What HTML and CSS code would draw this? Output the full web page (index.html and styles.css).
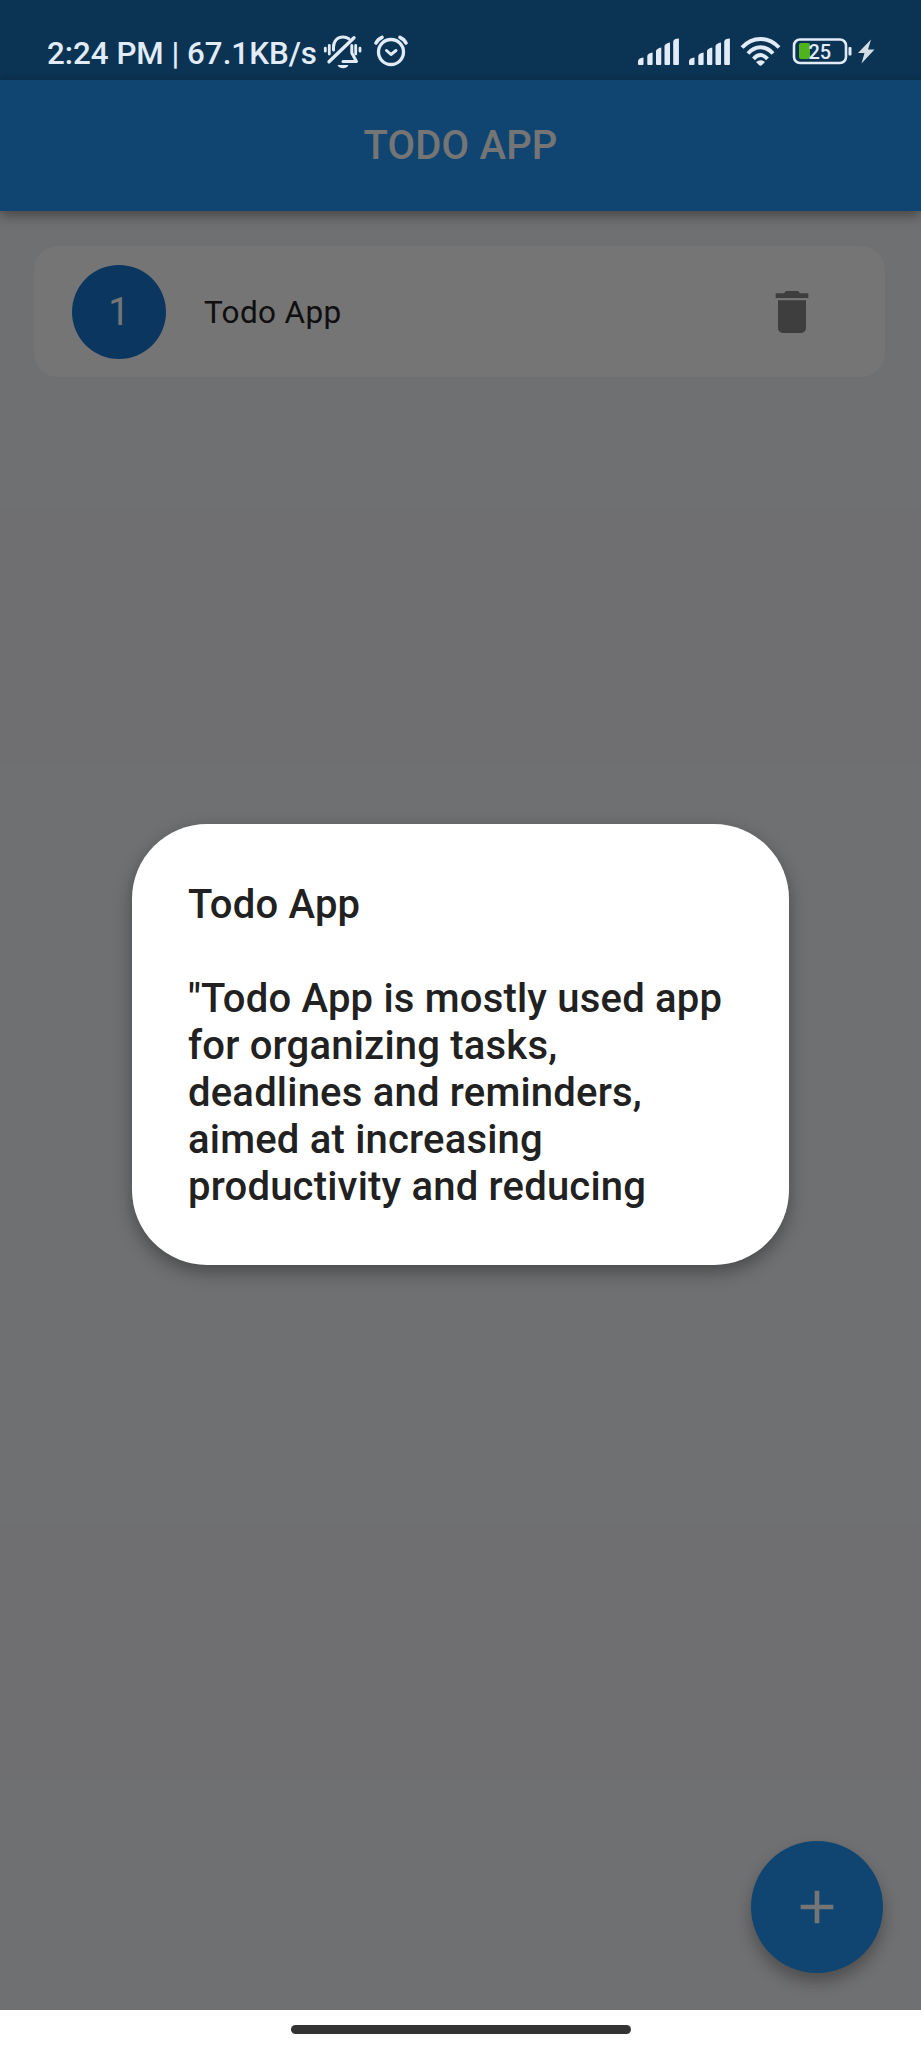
FILE: index.html
```html
<!DOCTYPE html>
<html lang="en">
<head>
<meta charset="utf-8">
<title>Todo App</title>
<link rel="stylesheet" href="styles.css">
</head>
<body>
<div class="screen">
  <div class="status-space"></div>
  <header class="app-bar"><h1 class="app-title">TODO APP</h1></header>
  <main class="content">
    <article class="todo">
      <span class="todo-number">1</span>
      <span class="todo-name">Todo App</span>
      <svg class="todo-delete" viewBox="0 0 24 24"><path d="M6 19c0 1.100.9 2 2 2h8c1.100 0 2-.9 2-2V7H6v12zM19 4h-3.500l-1-1h-5l-1 1H5v2h14V4z"/></svg>
    </article>
    <button class="fab"><svg viewBox="0 0 24 24"><path d="M19 13h-6v6h-2v-6H5v-2h6V5h2v6h6v2z"/></svg></button>
  </main>
  <footer class="nav"><div class="nav-handle"></div></footer>

  <div class="overlay">
    <section class="dialog">
      <p>Todo App</p>
      <p class="dialog-text">"Todo App is mostly used app<br>for organizing tasks,<br>deadlines and reminders,<br>aimed at increasing<br>productivity and reducing</p>
    </section>
  </div>

  <div class="status">
    <span class="status-text">2:24 PM | 67.1KB/s</span>
    <svg class="status-left" width="86" height="36" viewBox="323 33 86 36" fill="none" stroke="#e2ecf8" stroke-width="3" stroke-linecap="round" stroke-linejoin="round">
      <path d="M325.300 48.200v3M329.300 45.500v8.500M355.700 45.500v8.500M360 48.200v3" stroke-width="2.800"/>
      <path d="M333.500 50V47c0-6 4-10 9.500-10c2.400 0 4.300.7 5.900 1.800M351.800 45.500v7.500l4.700 8.500H343"/>
      <path d="M354 37.800L329 61.800" stroke-width="3.400"/>
      <path d="M337.500 65h11c-1 2.300-3 3.200-5.400 3.200s-4.600-.9-5.600-3.200z" fill="#e2ecf8" stroke="none"/>
      <circle cx="391" cy="52" r="12.500" stroke-width="3.300"/>
      <path d="M386.500 50.500l4.500 4 5-4" stroke-width="3"/>
      <path d="M376 43q2-4 6-5.700M400 37.300q4 1.700 6 5.700" stroke-width="3.600"/>
    </svg>
    <svg class="status-right" width="240" height="36" viewBox="636 33 240 36" fill="#e2ecf8">
      <g id="signal">
        <path d="M638 64v-2.500q0-3.500 5.500-4v6.500q0 1-1 1h-3.500q-1 0-1-1zM647.300 64V56q.5-3 5.300-3.500V64q0 1-1 1h-3.300q-1 0-1-1zM656 64V51q.5-2.500 5.300-3.500V64q0 1-1 1h-3.300q-1 0-1-1zM664.500 64V46q.5-2.500 5.500-3.500V64q0 1-1 1h-3.500q-1 0-1-1zM673.200 64V41.500q.5-2.800 5.700-3V64q0 1-1 1h-3.700q-1 0-1-1z"/>
      </g>
      <use href="#signal" x="51"/>
      <g fill="none" stroke="#e2ecf8" stroke-width="4">
        <path d="M742 47.500Q750 39 760.500 39T779 47.500"/>
        <path d="M748 53.500Q753.500 47.300 760.500 47.300T773 53.500"/>
        <path d="M753.500 58.800Q757 55 760.500 55T767.500 58.800"/>
      </g>
      <path d="M756 62q4.500-3.500 9 0l-3 3q-1.500 1.500-3 0z"/>
      <rect x="794" y="39.500" width="52" height="23.500" rx="6" fill="none" stroke="#e2ecf8" stroke-width="2.600"/>
      <rect x="799" y="43" width="11" height="16" rx="2" fill="#4fb41b"/>
      <rect x="848.500" y="47" width="3" height="8.500" rx="1"/>
      <text class="battery-text" x="808.500" y="59">25</text>
      <path d="M871 39.500L858 53h6.500L861.500 63.500 874.500 49.500H868z" fill="#d5dde4"/>
    </svg>
  </div>
</div>
</body>
</html>
```

FILE: styles.css
```css
* { box-sizing: border-box; }
body { margin: 0; font-family: Roboto, sans-serif; }
p, h1 { margin: 0; font: inherit; }
.screen { position: relative; display: flex; flex-direction: column; width: 921px; height: 2048px; background: #f2f3f6; overflow: hidden; }
.status-space { height: 80px; background: #1970b6; }
.app-bar { height: 131px; display: flex; align-items: center; justify-content: center; background: #2196f3; color: #fff; box-shadow: 0 4px 12px rgba(0,0,0,.4); }
.app-title { font-size: 40px; font-weight: 500; letter-spacing: .2px; }
.content { flex: 1; display: flex; flex-direction: column; justify-content: space-between; padding: 35px 38px 37px 34px; }
.todo { width: 851px; height: 131px; display: flex; align-items: center; padding: 0 65px 0 38px; border-radius: 24px; background: #fefefe; }
.todo-number { width: 94px; height: 94px; display: flex; align-items: center; justify-content: center; border-radius: 50%; background: #1976d2; color: #fff; font-size: 38px; }
.todo-name { flex: 1; margin-left: 38px; padding-top: 2px; font-size: 31.500px; letter-spacing: .35px; color: #222; }
.todo-delete { width: 56px; height: 56px; fill: #888; }
.fab { align-self: flex-end; width: 132px; height: 132px; padding: 0; display: flex; align-items: center; justify-content: center; border: 0; border-radius: 50%; background: #2196f3; box-shadow: 0 9px 16px rgba(0,0,0,.3); }
.fab svg { width: 56px; height: 56px; fill: #fff; }
.nav { height: 38px; display: flex; justify-content: center; padding-top: 15px; background: #fff; }
.nav-handle { width: 340px; height: 9px; border-radius: 5px; background: #333; }
.overlay { position: absolute; inset: 0 0 38px; display: flex; justify-content: center; align-items: flex-start; padding-top: 824px; background: rgba(0,0,0,.54); }
.dialog { width: 657px; height: 441px; padding: 57px 56px 55px; border-radius: 75px; background: #fff; color: #212121; font-size: 40px; font-weight: 500; line-height: 47px; letter-spacing: .2px; box-shadow: 0 7px 18px rgba(0,0,0,.35); white-space: nowrap; }
.dialog-text { margin-top: 47px; }
.status { position: absolute; inset: 0 0 auto; height: 80px; display: flex; align-items: flex-start; padding: 33px 45px 0 47px; color: #e2ecf8; }
.status-text { width: 276px; padding-top: 1px; font-size: 31.300px; line-height: 40px; font-weight: 500; white-space: nowrap; }
.status-right { margin-left: auto; }
.battery-text { font: 500 20px Roboto, sans-serif; }
```
